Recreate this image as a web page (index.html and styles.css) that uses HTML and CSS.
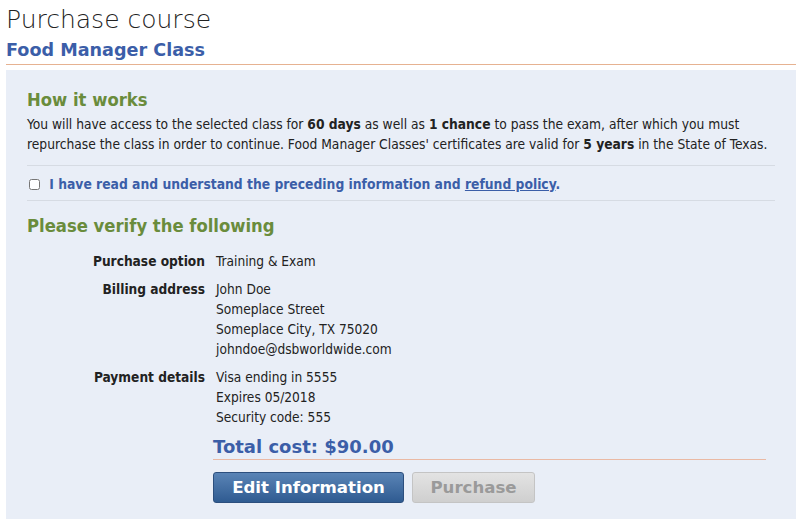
FILE: index.html
```html
<!DOCTYPE html>
<html>
<head>
<meta charset="utf-8">
<link rel="stylesheet" href="styles.css">
</head>
<body>
<div class="page">
  <h1 class="title">Purchase course</h1>
  <h2 class="course">Food Manager Class</h2>
  <div class="panel">
    <h3 class="section">How it works</h3>
    <p class="info">You will have access to the selected class for <b>60 days</b> as well as <b>1 chance</b> to pass the exam, after which you must repurchase the class in order to continue. Food Manager Classes' certificates are valid for <b>5 years</b> in the State of Texas.</p>
    <div class="agree">
      <label class="agree-label"><input type="checkbox" class="chk"> I have read and understand the preceding information and <a href="#" class="link">refund policy</a>.</label>
    </div>
    <h3 class="section verify">Please verify the following</h3>
    <dl class="details">
      <dt>Purchase option</dt>
      <dd>Training &amp; Exam</dd>
      <dt>Billing address</dt>
      <dd>John Doe<br>Someplace Street<br>Someplace City, TX 75020<br>johndoe@dsbworldwide.com</dd>
      <dt>Payment details</dt>
      <dd>Visa ending in 5555<br>Expires 05/2018<br>Security code: 555</dd>
    </dl>
    <div class="summary">
      <div class="total">Total cost: $90.00</div>
      <div class="actions">
        <button class="btn btn-primary">Edit Information</button>
        <button class="btn btn-disabled" disabled>Purchase</button>
      </div>
    </div>
  </div>
</div>
</body>
</html>
```
FILE: styles.css
```css
html, body { margin: 0; padding: 0; background: #fff; }
body { font-family: "DejaVu Sans", Verdana, sans-serif; color: #222; }
.page { padding: 0 4px 0 6px; }
.title {
  font-family: "DejaVu Sans", sans-serif;
  font-weight: 200;
  font-size: 25px;
  color: #222;
  margin: 0;
  padding-top: 5px;
  line-height: 30px;
}
.course {
  margin: 4px 0 0;
  font-size: 17.6px;
  line-height: 22px;
  font-weight: bold;
  color: #3b5ea8;
  padding-bottom: 3px;
  border-bottom: 1px solid #e6b291;
}
.panel {
  margin-top: 5px;
  background: #e9eef7;
  padding: 18px 21px 16px;
}
.section {
  margin: 0;
  font-size: 18.3px;
  font-stretch: condensed;
  line-height: 24px;
  color: #6a8c3c;
  font-weight: bold;
}
.info {
  margin: 2px 0 0;
  font-size: 13.7px;
  line-height: 20px;
  font-stretch: condensed;
  padding-bottom: 11px;
  border-bottom: 1px solid #d6dbe3;
}
.info b { color: #222; }
.agree {
  padding: 8px 0 6px;
  border-bottom: 1px solid #d6dbe3;
  font-size: 13.75px;
  line-height: 20px;
  font-weight: bold;
  color: #3b5ea8;
  font-stretch: condensed;
}
.chk { margin: 0 5px 0 2px; width: 11px; height: 11px; vertical-align: -1px; }
.link { color: #3b5ea8; text-decoration: underline; }
.verify { margin-top: 13px; }
.details {
  display: grid;
  grid-template-columns: 178px 1fr;
  column-gap: 11px;
  row-gap: 8px;
  margin: 13px 0 0;
  font-size: 13.6px;
  line-height: 20px;
  font-stretch: condensed;
}
.details dt { text-align: right; font-weight: bold; margin: 0; }
.details dd { margin: 0; }
.summary { margin-left: 186px; margin-right: 9px; margin-top: 9px; }
.total {
  font-size: 18px;
  line-height: 22px;
  font-weight: bold;
  color: #3b5ea8;
  padding-bottom: 1px;
  border-bottom: 1px solid #eab9a4;
}
.actions { display: flex; gap: 8px; margin-top: 12px; }
.btn {
  font-family: "DejaVu Sans", Verdana, sans-serif;
  font-size: 16.6px;
  font-weight: bold;
  height: 31px;
  border-radius: 3px;
  padding: 0;
}
.btn-primary {
  width: 191px;
  color: #fff;
  background: linear-gradient(#5a84b6, #2f5b91);
  border: 1px solid #2c4f7e;
}
.btn-disabled {
  width: 123px;
  color: #9a9a9a;
  background: linear-gradient(#e3e3e3, #cfcfcf);
  border: 1px solid #c4c4c4;
}
```
